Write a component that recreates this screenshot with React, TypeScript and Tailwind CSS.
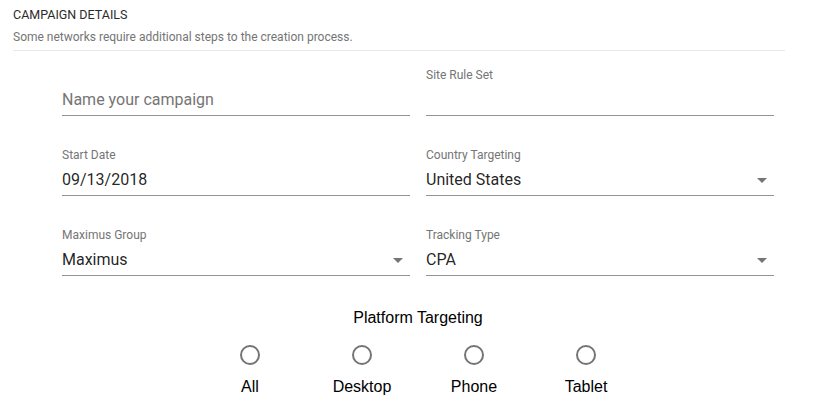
import React from "react";

const roboto = { fontFamily: "Roboto, 'Noto Sans', sans-serif" } as React.CSSProperties;

function Caret() {
  return (
    <svg width="10" height="5" viewBox="0 0 10 5" className="absolute right-[7px] top-[10px]">
      <path d="M0 0 L10 0 L5 5 Z" fill="#757575" />
    </svg>
  );
}

function Field({
  label,
  value,
  placeholder,
  select,
}: {
  label?: string;
  value?: string;
  placeholder?: string;
  select?: boolean;
}) {
  return (
    <div className="flex flex-col">
      <div className="h-[16px] text-[12px] leading-[16px] text-[#757575]">{label ?? ""}</div>
      <div className="relative mt-[5px] pb-[3px] border-b border-[#949494]">
        <div
          className={
            "h-[24px] text-[16px] leading-[24px] " +
            (placeholder ? "text-[#757575]" : "text-[rgba(0,0,0,0.87)]")
          }
        >
          {value ?? placeholder ?? ""}
        </div>
        {select && <Caret />}
      </div>
    </div>
  );
}

function Radio({ label }: { label: string }) {
  return (
    <div className="flex w-[112px] flex-col items-center">
      <div className="h-[20px] w-[20px] rounded-full border-2 border-[#757575]" />
      <div className="mt-[12px] text-[16px] leading-[20px] text-black">{label}</div>
    </div>
  );
}

export default function App() {
  return (
    <div className="h-[413px] w-[834px] overflow-hidden bg-white" style={roboto}>
      <div className="ml-[13px] w-[772px] border-b border-[#e8e8e8] pt-[7px] pb-[6px]">
        <div className="text-[12.5px] leading-[16px] text-[#2b2b2b]">CAMPAIGN DETAILS</div>
        <div className="mt-[7px] text-[12px] leading-[14px] text-[#757575]">
          Some networks require additional steps to the creation process.
        </div>
      </div>
      <div className="ml-[62px] mt-[16px] grid w-[712px] grid-cols-2 gap-x-[16px] gap-y-[31px]">
        <Field placeholder="Name your campaign" />
        <Field label="Site Rule Set" />
        <Field label="Start Date" value="09/13/2018" />
        <Field label="Country Targeting" value="United States" select />
        <Field label="Maximus Group" value="Maximus" select />
        <Field label="Tracking Type" value="CPA" select />
      </div>
      <div
        className="ml-[62px] mt-[32px] flex w-[712px] flex-col items-center"
        style={{ fontFamily: "'Liberation Sans', Arial, sans-serif" }}
      >
        <div className="text-[16px] leading-[20px] text-black">Platform Targeting</div>
        <div className="mt-[17px] flex">
          <Radio label="All" />
          <Radio label="Desktop" />
          <Radio label="Phone" />
          <Radio label="Tablet" />
        </div>
      </div>
    </div>
  );
}
